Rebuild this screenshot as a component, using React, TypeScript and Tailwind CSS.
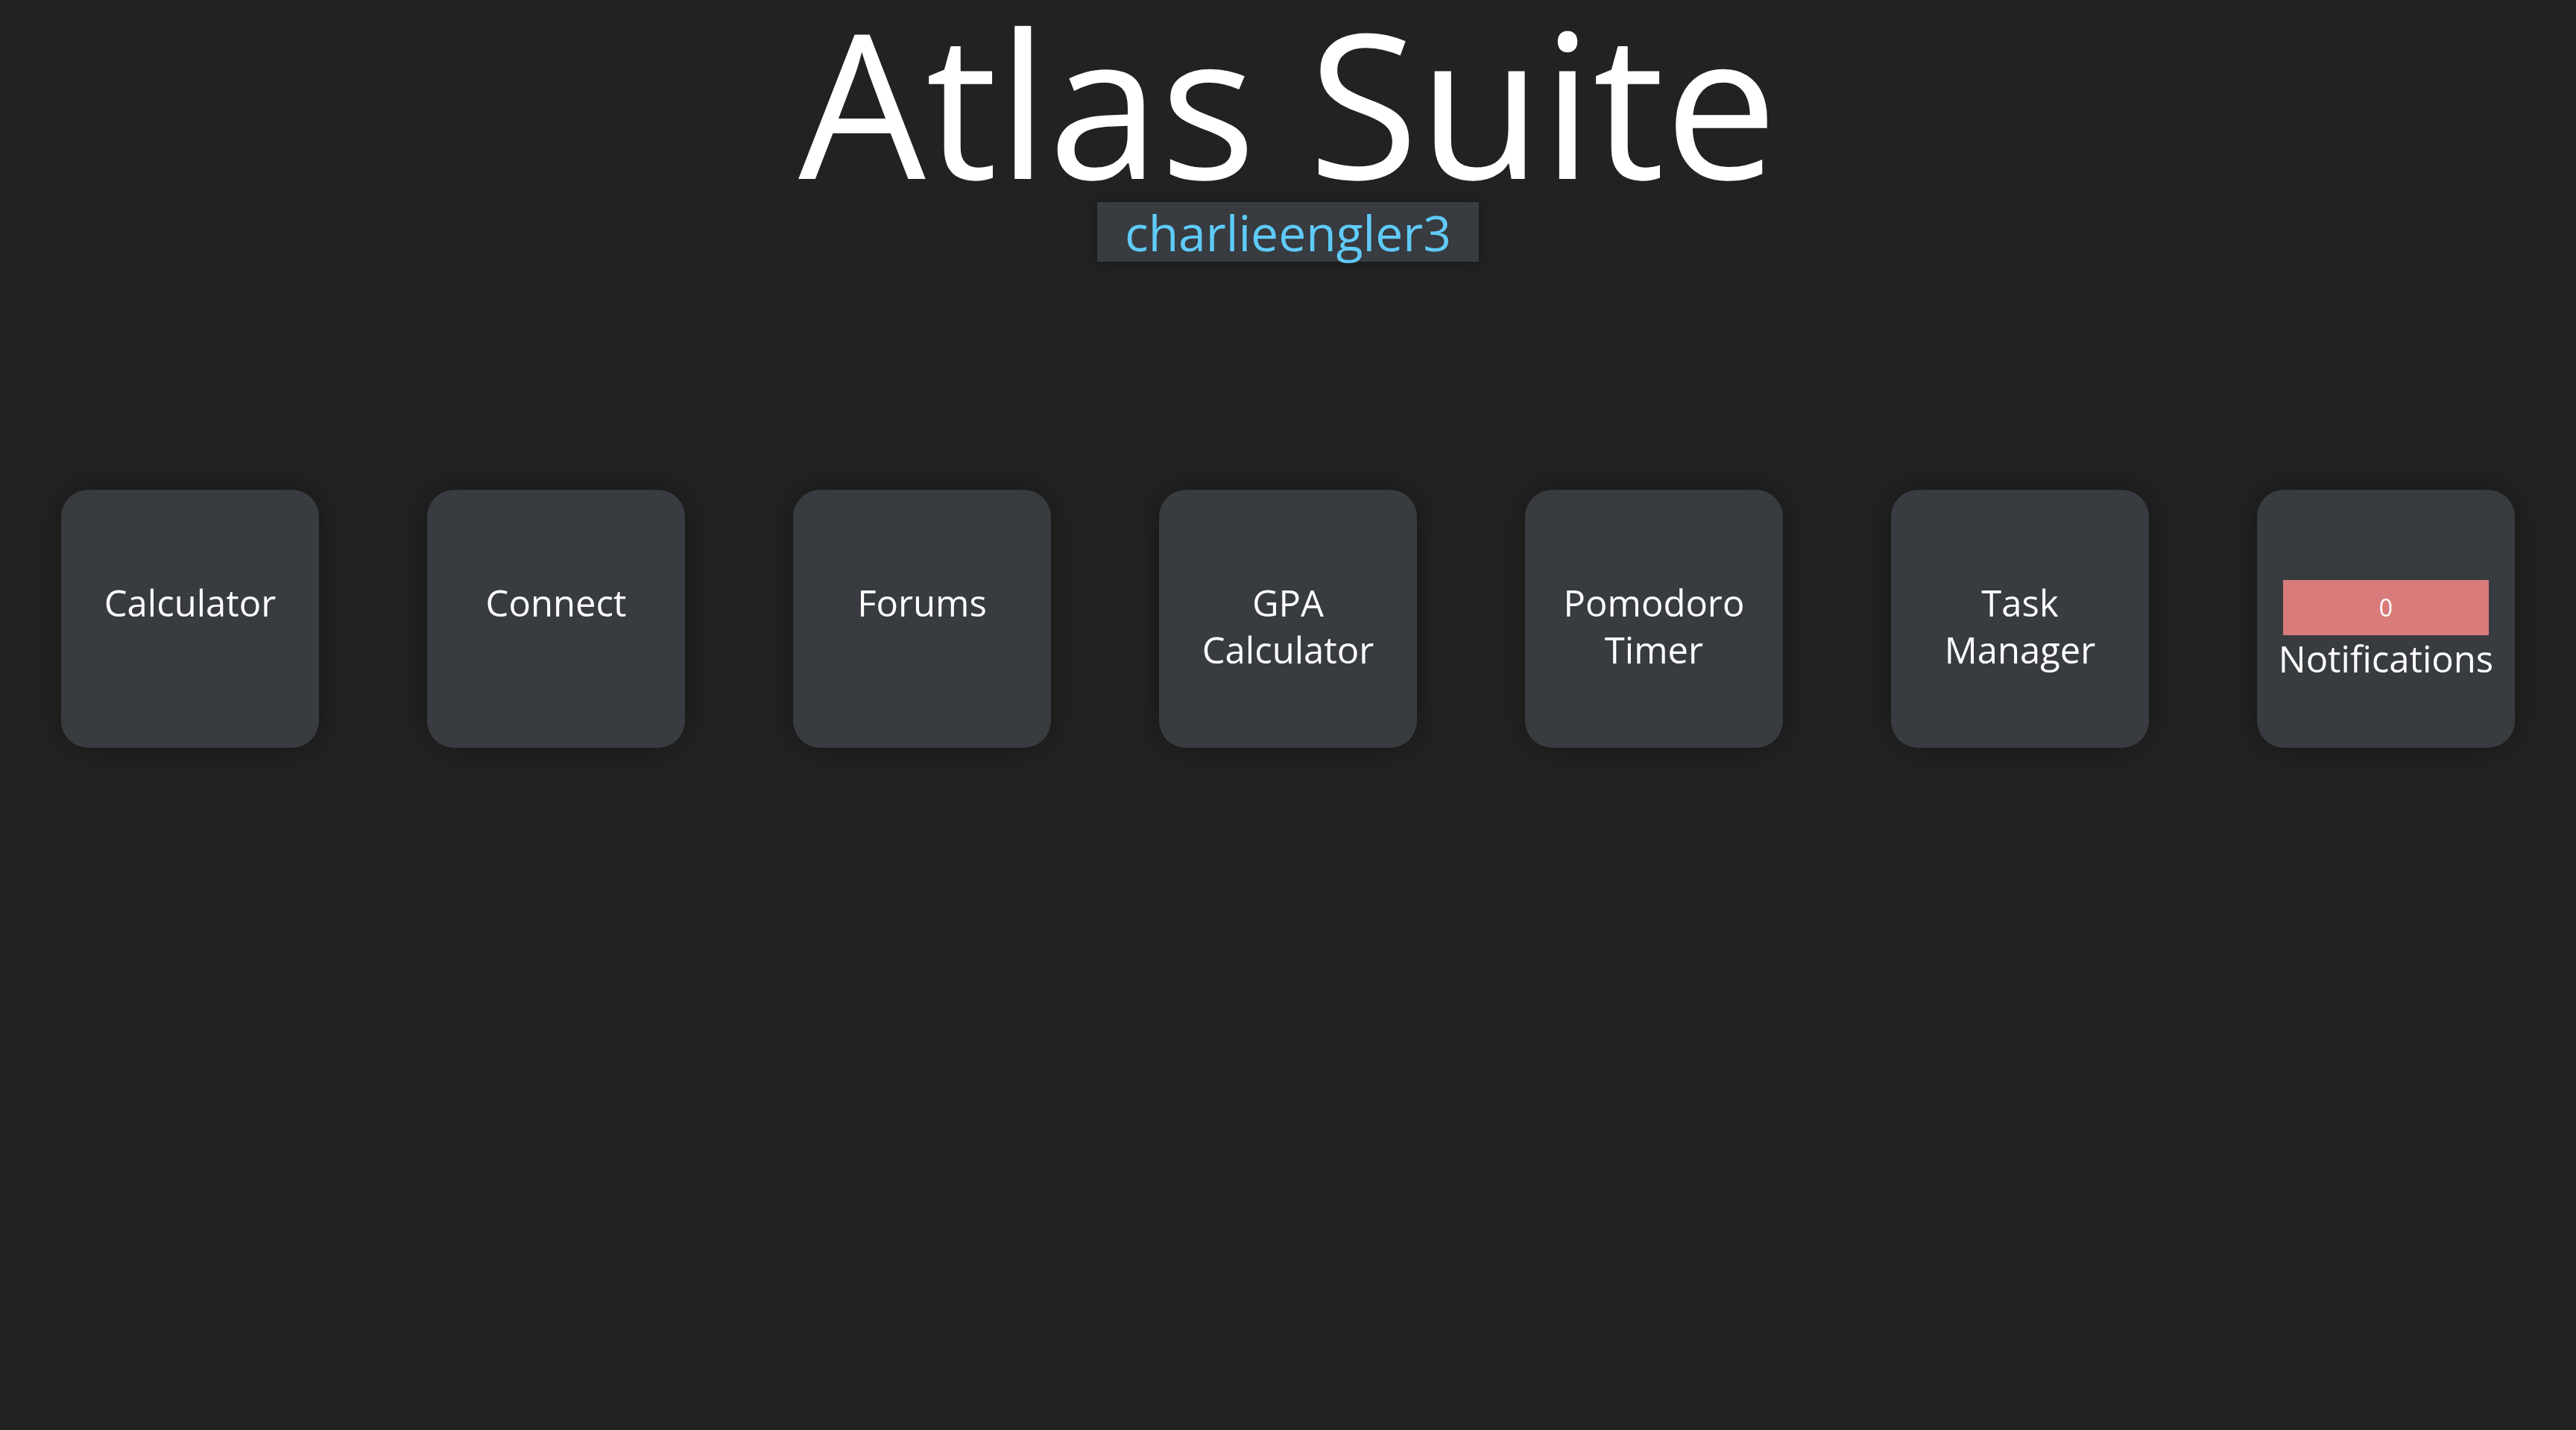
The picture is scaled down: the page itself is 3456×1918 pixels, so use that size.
import React from "react";

const cards: { label: string[] }[] = [
  { label: ["Calculator"] },
  { label: ["Connect"] },
  { label: ["Forums"] },
  { label: ["GPA", "Calculator"] },
  { label: ["Pomodoro", "Timer"] },
  { label: ["Task", "Manager"] },
];

function Card({ children, pt }: { children: React.ReactNode; pt: string }) {
  return (
    <div
      className={`w-[346px] h-[346px] rounded-[36px] bg-[#383b40] shadow-[0_0_36px_rgba(0,0,0,0.35)] flex flex-col items-center text-white text-[49px] leading-[63px] text-center ${pt}`}
    >
      {children}
    </div>
  );
}

export default function App() {
  return (
    <div
      className="min-h-screen w-full bg-[#222222] flex flex-col items-center"
      style={{ fontFamily: '"Open Sans", "DejaVu Sans", sans-serif' }}
    >
      <h1 className="text-white text-[270px] leading-[271px] font-normal mt-0">
        Atlas Suite
      </h1>
      <div className="bg-[#383b40] text-[#5fcbf9] text-[66px] leading-[80px] h-[80px] px-[37px] shadow-[0_0_20px_rgba(0,0,0,0.3)]">
        charlieengler3
      </div>
      <div className="w-full flex justify-between px-[82px] mt-[306px]">
        {cards.map((c) => (
          <Card key={c.label.join(" ")} pt="pt-[120px]">
            {c.label.map((l) => (
              <div key={l}>{l}</div>
            ))}
          </Card>
        ))}
        <Card pt="pt-[121px]">
          <div className="w-[276px] h-[74px] bg-[#d97a7b] flex items-center justify-center text-[32px] leading-none">
            0
          </div>
          <div>Notifications</div>
        </Card>
      </div>
    </div>
  );
}
